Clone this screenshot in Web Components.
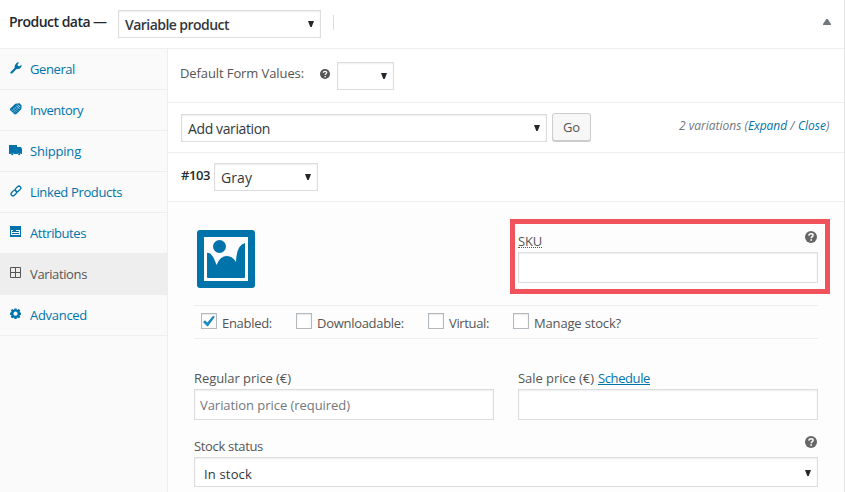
<!DOCTYPE html>
<html lang="en">
<head>
<meta charset="utf-8">
<title>Product data</title>
<style>
body{margin:0;background:#fff;font:13px/18px "Open Sans","Noto Sans",sans-serif;color:#555}
</style>
</head>
<body>
<product-data></product-data>
<script>
const define=(name,html,setup)=>customElements.define(name,class extends HTMLElement{
  connectedCallback(){
    if(this.shadowRoot)return;
    const t=document.createElement('template');
    t.innerHTML=typeof html==='function'?html(this):html;
    this.attachShadow({mode:'open'}).append(t.content.cloneNode(true));
    if(setup)setup(this,this.shadowRoot);
  }
});

/* One line of text whose letter spacing is adjusted so it fills width "w". */
define('fit-text',`<style>:host{display:inline-block;white-space:nowrap;line-height:18px;flex:none}span{display:inline-block}</style><span><slot></slot></span>`,(h,r)=>{
  const s=r.querySelector('span'),w=+h.getAttribute('w'),n=h.textContent.length;
  const gap=(w-s.getBoundingClientRect().width)/n;
  s.style.letterSpacing=gap.toFixed(3)+'px';
  h.style.width=w+'px';
});

const icons={
wrench:`<svg viewBox="0 0 12 12" width="12" height="12"><path d="M.3 10.2 4.6 6Q4.300 2.700 7.200.6L9.200.500 7.500 2.400 8 4 9.700 4.300 11.600 2.400Q11.700 6.700 7.600 6.900L6.200 7.300 2.200 11.500Q0 12 .3 10.200Z"/></svg>`,
tag:`<svg viewBox="0 0 12 12" width="12" height="12"><path d="M0 5.800 5.300.8 9.600.2 11.600 2.400 11.300 6.300 6.200 11.300 4.700 11.500 0 7Z"/><path d="M7.800 1.600 10.300 4.100M6.300 2.600 9.500 5.800" stroke="#fafafa" stroke-width=".8"/><path d="M2 6.500 6 10.500M3.300 5.300 7.200 9.200M4.500 4 8.500 8M2.200 8 6.700 3.500M3.700 9.300 8.200 4.800" stroke="#fafafa" stroke-width=".55" stroke-dasharray=".8 .7"/></svg>`,
truck:`<svg viewBox="0 0 13 11" width="13" height="11"><path d="M0 0H8V2H12L13 4V9H12A2 2 0 0 0 8.500 9H5A2 2 0 0 0 1.500 9H0Z"/><circle cx="3.200" cy="9.200" r="1.100"/><circle cx="10.200" cy="9.200" r="1.100"/></svg>`,
link:`<svg viewBox="0 0 12 12" width="12" height="12"><g fill="none" stroke="currentColor" stroke-width="1.300"><rect x="-2.900" y="-1.900" width="6.200" height="3.800" rx="1.900" transform="translate(7.900 4) rotate(-45)"/><rect x="-3.300" y="-1.900" width="6.200" height="3.800" rx="1.900" transform="translate(4 7.900) rotate(-45)"/></g></svg>`,
attrs:`<svg viewBox="0 0 11 11" width="11" height="11"><path d="M0 0H11V11H0Z"/><path d="M1.500 4V9M1.500 4.500H3M1.500 6.500H9.500M9.500 4V9M1.500 8.500H9.500M6 4.500H9.500" stroke="#fafafa" fill="none"/></svg>`,
grid:`<svg viewBox="0 0 11 11" width="11" height="11"><path d="M.5.5H10.500V10.500H.5ZM5.500 0V11M0 5.500H11" fill="none" stroke="currentColor"/></svg>`,
gear:`<svg viewBox="0 0 12 12" width="12" height="12"><path fill-rule="evenodd" d="M4.500.4H6.500L7 1.900 8.900 1 10.300 2.400 9.500 4.100 11 4.700V6.700L9.500 7.200 10.300 8.900 8.900 10.300 7.100 9.500 6.500 11H4.500L4 9.500 2.200 10.300.8 8.900 1.600 7.200 0 6.700V4.700L1.600 4.100.8 2.400 2.200 1 4 1.900ZM5.500 3.600A2.100 2.100 0 1 0 5.510 3.600Z"/></svg>`,
image:`<svg viewBox="0 0 58 58" width="58" height="58"><path fill-rule="evenodd" d="M3 0H55Q58 0 58 3V55Q58 58 55 58H3Q0 58 0 55V3Q0 0 3 0ZM7 7V51H51V7Z"/><circle cx="22.500" cy="16.500" r="6.500"/><path d="M10 23Q15 21.500 19.500 35Q23 26 30 26Q35.500 26 39 32Q39.500 15 48 13V47Q48 48 47 48H11Q10 48 10 47Z"/></svg>`,
help:`<svg viewBox="0 0 12 12" width="100%" height="100%"><circle cx="6" cy="6" r="6"/><path d="M3.900 4.600Q4 2.700 6.100 2.700 8.100 2.700 8.100 4.300C8.100 5.600 6.200 5.600 6.200 7.200" fill="none" stroke="#fff" stroke-width="1.500"/><path d="M5.400 8.300H7V9.800H5.400Z" fill="#fff"/></svg>`,
up:`<svg viewBox="0 0 8 6" width="8" height="6"><path d="M0 6V5L3.300 0H4.700L8 5V6Z"/></svg>`,
check:`<svg viewBox="0 0 12 11" width="12" height="11"><path d="M0 6 2 4.300 4.300 6.500 9.600.3 11.500 0 11.300 1.800 5 10.300H4Z"/></svg>`
};
define('ui-icon',h=>`<style>:host{display:block;flex:none}svg{display:block;fill:currentColor}</style>${icons[h.getAttribute('name')]}`);

define('ui-box',`<style>
:host{display:flex;box-sizing:border-box;flex:none;align-items:center;justify-content:space-between;height:28px;border:1px solid #ddd;background:#fff;box-shadow:inset 0 1px 2px rgba(0,0,0,.07);color:#32373c;font-size:14px;padding:2px 6px 0 6px}
:host([input]){height:31px;font-size:13px;padding:0 5px;color:#72777c}
svg{display:none;fill:#23282d;margin-bottom:3px}
:host([arrow]) svg{display:block}
div{min-width:0}
</style><div><slot></slot></div><svg width="6" height="6" viewBox="0 0 6 6"><path d="M0 0H6L3.700 6H2.300Z"/></svg>`);

define('nav-item',h=>`<style>
:host{display:flex;box-sizing:border-box;height:41px;border-bottom:1px solid #eee;color:#0073aa;padding:11px 0 0 10px}
:host([active]){background:#eee;color:#555}
.i{width:20px;padding-top:2px}
:host([wide]) .i{margin-left:-1px;width:21px;padding-top:3px}
</style><div class="i"><ui-icon name="${h.getAttribute('icon')}"></ui-icon></div><slot></slot>`);

define('check-item',`<style>
:host{display:flex;flex:none}
.b{box-sizing:border-box;width:16px;height:16px;border:1px solid #b4b9be;background:#fff;box-shadow:inset 0 1px 2px rgba(0,0,0,.1);margin-right:5px;padding:2px 1px;color:#1e8cbe}
ui-icon{visibility:hidden}:host([checked]) ui-icon{visibility:visible}
.t{padding-top:1px}
</style><div class="b"><ui-icon name="check"></ui-icon></div><div class="t"><slot></slot></div>`);

define('sku-field',`<style>
:host{display:block;box-sizing:border-box;width:320px;height:75px;border:5px solid #f1535c;padding:8px 7px 0 3px;background:#fdfdfd}
.l{display:flex;justify-content:space-between;height:20px}
.s{border-bottom:1px dotted #555;height:15px}
.s fit-text{line-height:17px}
ui-icon{width:12px;height:12px;margin:-1px 1px 0 0;color:#666}
ui-box{width:300px}
</style><div class="l"><div class="s"><fit-text w="24">SKU</fit-text></div><ui-icon name="help"></ui-icon></div><ui-box input></ui-box>`);

define('product-data',`<style>
:host{display:flex;flex-direction:column;box-sizing:border-box;width:845px;height:492px;border-right:1px solid #e5e5e5;overflow:hidden}
a{color:#0073aa;text-decoration:none}
a.u{text-decoration:underline}
header{display:flex;box-sizing:border-box;height:49px;border-bottom:1px solid #eee;padding:10px 13px 0 9px;color:#23282d;font-weight:600;font-size:14px;flex:none}
header>fit-text{margin:3px 3px 0 0}
header>.dash{font-weight:400;margin-right:11px}
header ui-box{width:203px;font-weight:600}
.sep{width:1px;height:15px;background:#ddd;margin:5px 0 0 12px}
header ui-icon{margin:9px 0 0 auto;color:#72777c}
main{display:flex;flex:1;min-height:0}
nav{box-sizing:border-box;width:168px;background:#fafafa;border-right:1px solid #eee;flex:none}
section{flex:1;display:flex;flex-direction:column}
.row{display:flex;box-sizing:border-box;border-bottom:1px solid #eee;flex:none}
.r1{height:54px;padding:13px 0 0 12px}
.r1>fit-text{margin-top:2px}
.r1 ui-icon{width:10px;height:10px;margin:7px 7px 0 16px;color:#555}
.r1 ui-box{width:57px}
.r2{height:50px;padding:10px 14px 0 13px}
.r2>ui-box{width:366px;margin-top:1px}
button{box-sizing:border-box;width:39px;height:28px;margin-left:5px;padding:0;border:1px solid #ccc;border-radius:3px;background:#f7f7f7;box-shadow:0 1px 0 #ccc;color:#555;font:inherit}
i{margin:4px 0 0 auto;color:#72777c;font-size:12px;display:flex}
.r3{height:49px;padding:10px 13px;color:#23282d;font-weight:600}
.r3>fit-text{margin:3px 4px 0 0}
.r3 ui-box{width:104px;font-weight:400}
.body{flex:1;background:#fdfdfd;padding:17px 14px 0 26px}
.top{display:flex;justify-content:space-between;height:86px}
.top>ui-icon{margin:11px 0 0 3px;color:#0073aa}
.checks{display:flex;box-sizing:border-box;width:624px;height:34px;border:solid #eee;border-width:1px 0;padding:7px 0 0 7px}
.prices{display:flex;gap:24px;padding-top:30px}
.prices>div{width:300px}
.lab{display:flex;height:20px}
.lab.st{width:624px;justify-content:space-between;margin-top:17px}
.st ui-icon{width:12px;height:12px;margin:-1px 1px 0 0;color:#666}
.body>ui-box{width:624px;height:30px;padding:4px 6px 0 9px;font-size:13px}
</style>
<header><fit-text w="81">Product data</fit-text><fit-text class="dash" w="14">—</fit-text><ui-box arrow><fit-text w="104">Variable product</fit-text></ui-box><div class="sep"></div><ui-icon name="up"></ui-icon></header>
<main><nav>
<nav-item icon="wrench"><fit-text w="45">General</fit-text></nav-item>
<nav-item icon="tag"><fit-text w="53">Inventory</fit-text></nav-item>
<nav-item icon="truck" wide><fit-text w="51">Shipping</fit-text></nav-item>
<nav-item icon="link"><fit-text w="92">Linked Products</fit-text></nav-item>
<nav-item icon="attrs"><fit-text w="56">Attributes</fit-text></nav-item>
<nav-item icon="grid" active><fit-text w="57">Variations</fit-text></nav-item>
<nav-item icon="gear"><fit-text w="57">Advanced</fit-text></nav-item>
</nav><section>
<div class="row r1"><fit-text w="124">Default Form Values:</fit-text><ui-icon name="help"></ui-icon><ui-box arrow></ui-box></div>
<div class="row r2"><ui-box arrow><fit-text w="82">Add variation</fit-text></ui-box><button><fit-text w="17">Go</fit-text></button><i><fit-text w="69">2 variations (</fit-text><fit-text w="39"><a>Expand</a></fit-text><fit-text w="11">&nbsp;/&nbsp;</fit-text><fit-text w="28"><a>Close</a></fit-text><fit-text w="4">)</fit-text></i></div>
<div class="row r3"><fit-text w="29">#103</fit-text><ui-box arrow><fit-text w="31">Gray</fit-text></ui-box></div>
<div class="body">
<div class="top"><ui-icon name="image"></ui-icon><sku-field></sku-field></div>
<div class="checks">
<check-item checked style="width:95px"><fit-text w="50">Enabled:</fit-text></check-item>
<check-item style="width:132px"><fit-text w="87">Downloadable:</fit-text></check-item>
<check-item style="width:85px"><fit-text w="40">Virtual:</fit-text></check-item>
<check-item><fit-text w="87">Manage stock?</fit-text></check-item>
</div>
<div class="prices">
<div><div class="lab"><fit-text w="97">Regular price (€)</fit-text></div><ui-box input><fit-text w="150">Variation price (required)</fit-text></ui-box></div>
<div><div class="lab"><fit-text w="76" style="margin-right:4px">Sale price (€)</fit-text><fit-text w="52"><a class="u">Schedule</a></fit-text></div><ui-box input></ui-box></div>
</div>
<div class="lab st"><fit-text w="69">Stock status</fit-text><ui-icon name="help"></ui-icon></div>
<ui-box arrow><fit-text w="48">In stock</fit-text></ui-box>
</div>
</section></main>`);
</script>
</body>
</html>
